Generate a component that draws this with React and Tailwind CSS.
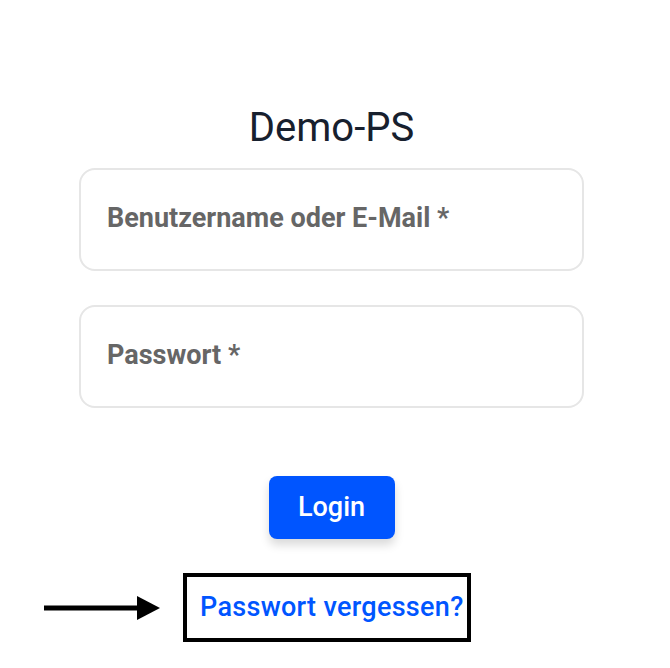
import React from "react";

function Field({ label }) {
    return (
        <div className="h-[103px] w-full rounded-[16px] border-2 border-[#e6e6e6] bg-white flex items-center pl-[26px]">
            <span className="text-[27px] font-bold text-[#666666] -mt-[3px]">{label}</span>
        </div>
    );
}

export default function App() {
    return (
        <div className="min-h-[668px] w-[670px] bg-white font-['Roboto',sans-serif]">
            <div className="ml-[79px] w-[505px] pt-[102px] flex flex-col items-center">
                <h1 className="text-[40px] leading-[52px] font-normal text-[#17202e] mb-[14px]">Demo-PS</h1>
                <div className="w-full flex flex-col gap-[34px]">
                    <Field label="Benutzername oder E-Mail *" />
                    <Field label="Passwort *" />
                </div>
                <button
                    type="button"
                    className="mt-[68px] h-[63px] w-[126px] rounded-[8px] bg-[#0055ff] text-white text-[27px] font-medium shadow-[0_6px_10px_rgba(0,0,0,0.15)]"
                >
                    Login
                </button>
            </div>
            <div className="mt-[34px] flex items-center">
                <svg className="ml-[44px] mr-[23px]" width="116" height="26" viewBox="0 0 116 26">
                    <rect x="0" y="10.5" width="95" height="5" fill="#000" />
                    <polygon points="93,1 116,13 93,25" fill="#000" />
                </svg>
                <div className="w-[288px] h-[69px] border-[4px] border-black flex items-center pl-[13px]">
                    <span className="text-[27px] font-medium tracking-[0.3px] text-[#0055ff]">Passwort vergessen?</span>
                </div>
            </div>
        </div>
    );
}
